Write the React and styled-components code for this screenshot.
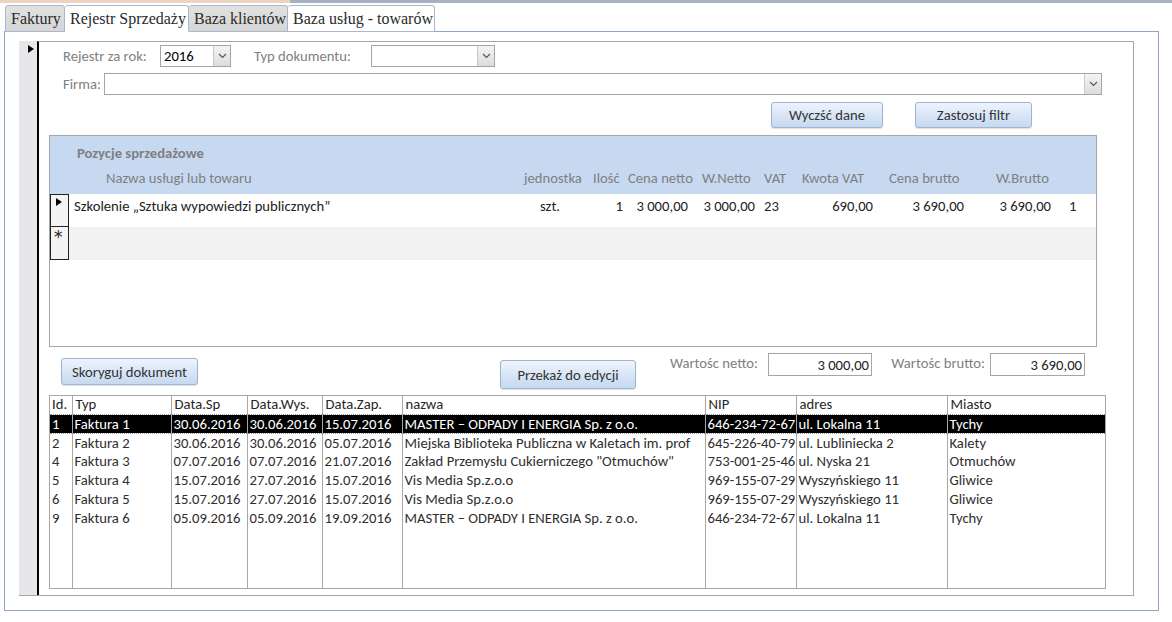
import React from "react";
import styled, { createGlobalStyle } from "styled-components";

const GlobalStyle = createGlobalStyle`
  html, body {
    margin: 0;
    padding: 0;
    background: #fff;
  }
  body {
    font-family: Carlito, Lato, "Open Sans", sans-serif;
    font-size: 14.67px;
    color: #262626;
  }
  * { box-sizing: border-box; }
`;

const TopStrip = styled.div`
  height: 3px;
  background: linear-gradient(to right, #ecd4c0 0, #ecd4c0 290px, #a9b0bf 290px);
`;

const TabBar = styled.div`
  display: flex;
  margin: 2px 0 -1px 5px;
  position: relative;
  z-index: 1;
`;

const Tab = styled.div`
  width: ${(p) => p.$w}px;
  height: 27px;
  padding: 4px 0 0 5px;
  font-family: "Liberation Serif", "Times New Roman", serif;
  font-size: 16px;
  color: #2a2a2a;
  white-space: nowrap;
  border: 1px solid #a9b8cf;
  border-left-width: ${(p) => (p.$first ? 1 : 0)}px;
  border-bottom-color: ${(p) => (p.$active ? "#fff" : "#a9b8cf")};
  border-radius: 3px 3px 0 0;
  background: ${(p) => (p.$grey ? "linear-gradient(#e2e2e2, #d6d6d6)" : "#fff")};
`;

const Panel = styled.div`
  margin-left: 4px;
  width: 1155px;
  height: 580px;
  border: 1px solid #8fa3c2;
  padding: 9px 24px 14px 14px;
  display: flex;
`;

const Form = styled.div`
  flex: 1;
  display: flex;
  border-bottom: 1px solid #a6a6a6;
  border-right: 1px solid #a6a6a6;
`;

const SelectorCol = styled.div`
  width: 18px;
  background: #e5e7eb;
  padding: 4px 0 0 9px;
`;

const Arrow = styled.div`
  width: 0;
  height: 0;
  border-left: 6px solid #000;
  border-top: 4.5px solid transparent;
  border-bottom: 4.5px solid transparent;
`;

const FormBody = styled.div`
  flex: 1;
  border-left: 2px solid #000;
  border-top: 1px solid #a6a6a6;
  padding: 3px 0 6px 0;
  display: flex;
  flex-direction: column;
`;

const FieldRow = styled.div`
  display: flex;
  align-items: center;
  height: 22px;
  margin-top: ${(p) => p.$mt || 0}px;
  padding-left: 24px;
`;

const Label = styled.div`
  width: ${(p) => p.$w}px;
  margin-left: ${(p) => p.$ml || 0}px;
  margin-top: ${(p) => p.$mt || 0}px;
  color: #808080;
  white-space: nowrap;
  text-align: ${(p) => p.$align || "left"};
  padding-right: ${(p) => p.$pr || 0}px;
`;

const ComboBox = styled.div`
  width: ${(p) => p.$w}px;
  height: 22px;
  border: 1px solid #a5a5a5;
  display: flex;
  background: #fff;
`;

const ComboText = styled.div`
  flex: 1;
  padding: 1px 0 0 3px;
  color: #000;
`;

const DropButton = styled.div`
  width: 17px;
  background: linear-gradient(#f4f4f4, #dcdcdc);
  border-left: 1px solid #c8c8c8;
  display: flex;
  align-items: center;
  justify-content: center;
`;

const ButtonRow = styled.div`
  display: flex;
  justify-content: flex-end;
  gap: 32px;
  margin-top: 7px;
  padding-right: 101px;
`;

const Button = styled.div`
  width: ${(p) => p.$w}px;
  height: ${(p) => p.$h || 26}px;
  margin-top: ${(p) => p.$mt || 0}px;
  margin-left: ${(p) => p.$ml || 0}px;
  border: 1px solid #9db4d2;
  border-radius: 3px;
  background: linear-gradient(#eef4fc, #d9e6f6 50%, #c6d9f0);
  box-shadow: 0 1px 1px rgba(0, 0, 0, 0.12);
  color: #333;
  display: flex;
  align-items: center;
  justify-content: center;
  white-space: nowrap;
`;

const SubForm = styled.div`
  margin: 7px 0 0 10px;
  width: 1048px;
  height: 212px;
  border: 1px solid #a6a6a6;
  background: #fff;
`;

const HeaderBand = styled.div`
  background: #c6d9f1;
  height: 58px;
  padding-top: 9px;
`;

const SubTitle = styled.div`
  padding-left: 27px;
  font-weight: bold;
  color: #7f7f7f;
  line-height: 17px;
`;

const GridRow = styled.div`
  display: grid;
  grid-template-columns: 19px ${(p) => p.$cols};
  height: ${(p) => p.$h}px;
  margin-top: ${(p) => p.$mt || 0}px;
  background: ${(p) => p.$bg || "transparent"};
`;

const HeadCell = styled.div`
  color: #7f7f7f;
  white-space: nowrap;
  line-height: 17px;
  padding-left: ${(p) => p.$pl}px;
`;

const Cell = styled.div`
  white-space: nowrap;
  padding-top: 4px;
  line-height: 17px;
  color: #222;
  text-align: ${(p) => p.$align};
  padding-left: ${(p) => (p.$align === "left" ? p.$pad : 0)}px;
  padding-right: ${(p) => (p.$align === "right" ? p.$pad : 0)}px;
`;

const RowSelector = styled.div`
  border: 1px solid #222;
  border-top-width: ${(p) => (p.$top ? 1 : 0)}px;
  background: #f4f4f4;
  padding: ${(p) => (p.$top ? "3px 0 0 5px" : "3px 0 0 3px")};
  font-family: "DejaVu Sans", sans-serif;
  font-size: 17px;
  line-height: 14px;
  color: #222;
`;

const BottomRow = styled.div`
  display: flex;
  align-items: flex-start;
  height: 36px;
  margin-top: 6px;
  padding-left: 22px;
`;

const ValueBox = styled.div`
  width: ${(p) => p.$w}px;
  height: 23px;
  border: 1px solid #a5a5a5;
  text-align: right;
  padding: 2px 2px 0 0;
  color: #222;
`;

const ListBox = styled.div`
  margin: 6px 0 0 10px;
  width: 1057px;
  height: 194px;
  border: 1px solid #a6a6a6;
  overflow: hidden;
`;

const Table = styled.table`
  width: 100%;
  height: 100%;
  border-collapse: collapse;
  table-layout: fixed;
  font-size: 14.67px;
`;

const Th = styled.th`
  font-weight: normal;
  text-align: left;
  height: 18px;
  padding: 0 0 0 3px;
  line-height: 17px;
  color: #262626;
  border-left: 1px solid #a8a8a8;
  white-space: nowrap;
  overflow: hidden;
  &:first-child { border-left: none; padding-left: 2px; }
`;

const Td = styled.td`
  height: ${(p) => (p.$fill ? "auto" : "19px")};
  padding: 0 0 0 2px;
  line-height: 18px;
  vertical-align: top;
  white-space: nowrap;
  overflow: hidden;
  border-left: 1px solid #a8a8a8;
  &:first-child { border-left: none; padding-left: 2px; }
`;

const Tr = styled.tr`
  background: ${(p) => (p.$sel ? "#000" : "#fff")};
  color: ${(p) => (p.$sel ? "#fff" : "#2e2e2e")};
  & > td {
    border-top: ${(p) => (p.$sel ? "1px dotted #9a9a9a" : "none")};
    border-bottom: ${(p) => (p.$sel ? "1px dotted #9a9a9a" : "none")};
  }
`;

const Chevron = () => (
  <svg width="9" height="6" viewBox="0 0 9 6">
    <path d="M1 1 L4.5 4.5 L8 1" fill="none" stroke="#555" strokeWidth="1.1" />
  </svg>
);

const Combo = ({ w, value }) => (
  <ComboBox $w={w}>
    <ComboText>{value}</ComboText>
    <DropButton>
      <Chevron />
    </DropButton>
  </ComboBox>
);

const tabs = [
  { name: "Faktury", w: 60, grey: true },
  { name: "Rejestr Sprzedaży", w: 124, active: true },
  { name: "Baza klientów", w: 99, grey: true },
  { name: "Baza usług - towarów", w: 147 },
];

// kolumny podformularza pozycji
const pozCols = [
  { w: 446, head: "Nazwa usługi lub towaru", hp: 37, align: "left", pad: 5 },
  { w: 75, head: "jednostka", hp: 9, align: "left", pad: 25 },
  { w: 38, head: "Ilość", hp: 3, align: "right", pad: 5 },
  { w: 70, head: "Cena netto", hp: 0, align: "right", pad: 10 },
  { w: 62, head: "W.Netto", hp: 4, align: "right", pad: 5 },
  { w: 36, head: "VAT", hp: 4, align: "left", pad: 4 },
  { w: 86, head: "Kwota VAT", hp: 6, align: "right", pad: 9 },
  { w: 93, head: "Cena brutto", hp: 7, align: "right", pad: 11 },
  { w: 87, head: "W.Brutto", hp: 21, align: "right", pad: 11 },
  { w: 34, head: "", hp: 0, align: "left", pad: 7 },
];

const pozycja = [
  "Szkolenie „Sztuka wypowiedzi publicznych”",
  "szt.",
  "1",
  "3 000,00",
  "3 000,00",
  "23",
  "690,00",
  "3 690,00",
  "3 690,00",
  "1",
];

const colTemplate = pozCols.map((c) => c.w + "px").join(" ");

const listCols = [
  { head: "Id.", w: 22 },
  { head: "Typ", w: 99 },
  { head: "Data.Sp", w: 76 },
  { head: "Data.Wys.", w: 75 },
  { head: "Data.Zap.", w: 80 },
  { head: "nazwa", w: 303 },
  { head: "NIP", w: 91 },
  { head: "adres", w: 151 },
  { head: "Miasto", w: 158 },
];

const faktury = [
  ["1", "Faktura 1", "30.06.2016", "30.06.2016", "15.07.2016", "MASTER – ODPADY I ENERGIA Sp. z o.o.", "646-234-72-67", "ul. Lokalna 11", "Tychy"],
  ["2", "Faktura 2", "30.06.2016", "30.06.2016", "05.07.2016", "Miejska Biblioteka Publiczna w Kaletach im. prof", "645-226-40-79", "ul. Lubliniecka 2", "Kalety"],
  ["4", "Faktura 3", "07.07.2016", "07.07.2016", "21.07.2016", "Zakład Przemysłu Cukierniczego \"Otmuchów\"", "753-001-25-46", "ul. Nyska 21", "Otmuchów"],
  ["5", "Faktura 4", "15.07.2016", "27.07.2016", "15.07.2016", "Vis Media Sp.z.o.o", "969-155-07-29", "Wyszyńskiego 11", "Gliwice"],
  ["6", "Faktura 5", "15.07.2016", "27.07.2016", "15.07.2016", "Vis Media Sp.z.o.o", "969-155-07-29", "Wyszyńskiego 11", "Gliwice"],
  ["9", "Faktura 6", "05.09.2016", "05.09.2016", "19.09.2016", "MASTER – ODPADY I ENERGIA Sp. z o.o.", "646-234-72-67", "ul. Lokalna 11", "Tychy"],
];

const App = () => {
  return (
    <>
      <GlobalStyle />
      <TopStrip />
      <TabBar>
        {tabs.map((t, i) => (
          <Tab key={t.name} $w={t.w} $first={i === 0} $active={t.active} $grey={t.grey}>
            {t.name}
          </Tab>
        ))}
      </TabBar>
      <Panel>
        <Form>
          <SelectorCol>
            <Arrow />
          </SelectorCol>
          <FormBody>
            <FieldRow>
              <Label $w={97}>Rejestr za rok:</Label>
              <Combo w={71} value="2016" />
              <Label $w={117} $ml={23}>Typ dokumentu:</Label>
              <Combo w={124} value="" />
            </FieldRow>
            <FieldRow $mt={6}>
              <Label $w={41}>Firma:</Label>
              <Combo w={998} value="" />
            </FieldRow>
            <ButtonRow>
              <Button $w={112}>Wyczść dane</Button>
              <Button $w={117}>Zastosuj filtr</Button>
            </ButtonRow>

            <SubForm>
              <HeaderBand>
                <SubTitle>Pozycje sprzedażowe</SubTitle>
                <GridRow $cols={colTemplate} $h={17} $mt={8}>
                  <div />
                  {pozCols.map((c, i) => (
                    <HeadCell key={i} $pl={c.hp}>
                      {c.head}
                    </HeadCell>
                  ))}
                </GridRow>
              </HeaderBand>
              <GridRow $cols={colTemplate} $h={33}>
                <RowSelector $top>
                  <Arrow />
                </RowSelector>
                {pozCols.map((c, i) => (
                  <Cell key={i} $align={c.align} $pad={c.pad}>
                    {pozycja[i]}
                  </Cell>
                ))}
              </GridRow>
              <GridRow $cols={colTemplate} $h={33} $bg="#f2f2f2">
                <RowSelector>*</RowSelector>
              </GridRow>
            </SubForm>

            <BottomRow>
              <Button $w={137} $h={27} $mt={5}>Skoryguj dokument</Button>
              <Button $w={136} $h={29} $mt={7} $ml={302}>Przekaż do edycji</Button>
              <Label $w={132} $align="right" $pr={10} $mt={1}>
                Wartośc netto:
              </Label>
              <ValueBox $w={104}>3 000,00</ValueBox>
              <Label $w={118} $align="right" $pr={5} $mt={1}>
                Wartośc brutto:
              </Label>
              <ValueBox $w={95}>3 690,00</ValueBox>
            </BottomRow>

            <ListBox>
              <Table>
                <colgroup>
                  {listCols.map((c) => (
                    <col key={c.head} style={{ width: c.w }} />
                  ))}
                </colgroup>
                <thead>
                  <tr>
                    {listCols.map((c) => (
                      <Th key={c.head}>{c.head}</Th>
                    ))}
                  </tr>
                </thead>
                <tbody>
                  {faktury.map((f, i) => (
                    <Tr key={f[0]} $sel={i === 0}>
                      {f.map((v, j) => (
                        <Td key={j}>{v}</Td>
                      ))}
                    </Tr>
                  ))}
                  <Tr>
                    {listCols.map((c) => (
                      <Td key={c.head} $fill />
                    ))}
                  </Tr>
                </tbody>
              </Table>
            </ListBox>
          </FormBody>
        </Form>
      </Panel>
    </>
  );
};

export default App;
